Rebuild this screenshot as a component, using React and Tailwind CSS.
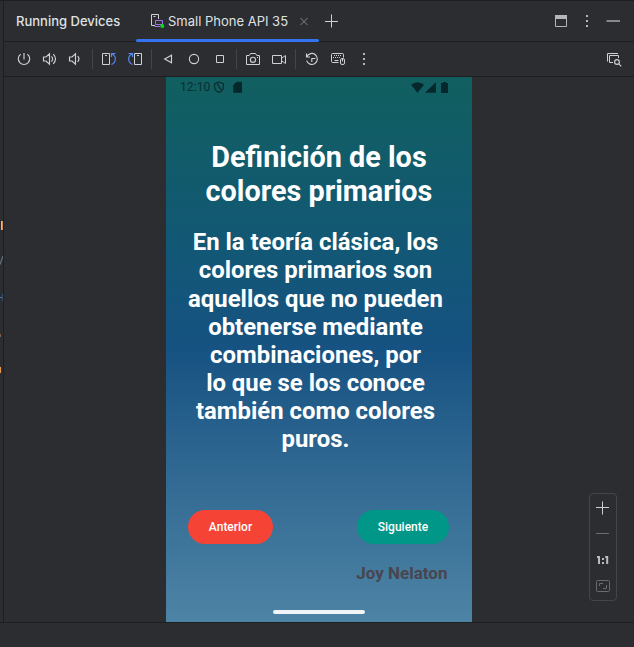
import React from "react";

function Icon({ children, className = "", w = 16, h = 16 }) {
  return (
    <svg
      width={w}
      height={h}
      viewBox={`0 0 ${w} ${h}`}
      fill="none"
      stroke="#ced0d6"
      className={`block shrink-0 ${className}`}
    >
      {children}
    </svg>
  );
}

function Tool({ children }) {
  return (
    <button className="flex h-[26px] w-[26px] shrink-0 items-center justify-center">
      <Icon>{children}</Icon>
    </button>
  );
}

function Separator() {
  return (
    <div className="flex h-5 w-[7px] shrink-0 justify-center">
      <div className="w-px bg-[#43454a]" />
    </div>
  );
}

function MoreDots() {
  return (
    <g fill="#b4b6bb" stroke="none">
      <rect x="7" y="2" width="2" height="2" />
      <rect x="7" y="7" width="2" height="2" />
      <rect x="7" y="12" width="2" height="2" />
    </g>
  );
}

function EditorEdge() {
  return (
    <div className="h-[621px] w-[3px] shrink-0 overflow-hidden">
      <svg width="3" height="621" viewBox="0 1 3 621" className="block">
        <rect x="1" y="221" width="1" height="9" fill="#a9c4e6" />
        <rect x="2" y="221" width="1" height="9" fill="#d68f4c" />
        <path d="M0 264.5 L3 256" stroke="#64727f" strokeWidth="1.2" />
        <path d="M0 297.5H3" stroke="#68717c" />
        <path d="M2.5 294V301" stroke="#345078" />
        <rect x="0" y="334" width="1" height="3" fill="#80604c" />
        <rect x="0" y="367" width="1" height="6" fill="#e59a4a" />
      </svg>
    </div>
  );
}

function TabBar() {
  return (
    <div className="flex h-10 shrink-0 items-center pl-3">
      <div className="w-[120px] shrink-0 whitespace-nowrap text-[13px] font-medium leading-5 text-[#dfe1e5]">
        Running Devices
      </div>
      <div className="flex h-10 w-[183px] shrink-0 flex-col">
        <div className="flex h-9 shrink-0 items-center pt-1 pl-[14px]">
          <Icon>
            <path d="M5 12.5H1.5V1.5H8.5V6" />
            <path d="M3.5 3.5H5.5" />
            <path d="M5.5 7.5H12.5V11.5H5.5ZM4.5 13.5H10" stroke="#a571e6" />
            <circle cx="12.3" cy="13" r="2" fill="#00e31c" stroke="none" />
          </Icon>
          <span className="ml-[2px] whitespace-nowrap text-[13px] leading-5 text-[#dfe1e5]">
            Small Phone API 35
          </span>
          <Icon className="ml-auto mr-[7px]">
            <path d="M4.5 5L11.5 12M11.5 5L4.5 12" stroke="#85878c" />
          </Icon>
        </div>
        <div className="relative z-10 mt-auto -mb-px h-[3px] shrink-0 rounded-[2px] bg-[#3574f0]" />
      </div>
      <Icon className="ml-[4px]">
        <path d="M8.5 1.5V14.5M2 8.5H15" />
      </Icon>
      <div className="ml-auto flex gap-[10px] pr-[13px]">
        <Icon>
          <path d="M2.5 3V13.5H13.5V3" stroke="#b4b6bb" />
          <rect x="2" y="2" width="12" height="4" fill="#b4b6bb" stroke="none" />
        </Icon>
        <Icon>
          <MoreDots />
        </Icon>
        <Icon>
          <path d="M1.5 8H15" stroke="#87898e" strokeWidth="2" />
        </Icon>
      </div>
    </div>
  );
}

function Toolbar() {
  return (
    <div className="flex h-[34px] shrink-0 items-center pl-[7px]">
      <Tool>
        <path d="M4.6 3.2A5.7 5.7 0 1 0 11.4 3.2M8 2V8.5" strokeWidth="1.15" />
      </Tool>
      <Tool>
        <path
          d="M1.5 6H4L7.5 2.8V13.2L4 10H1.5ZM9.5 5.4Q11.7 8 9.5 10.6M11.3 3.2Q15.7 8 11.3 12.8"
          strokeWidth="1.15"
        />
      </Tool>
      <Tool>
        <path d="M1.5 6H4L7.5 2.8V13.2L4 10H1.5ZM9.6 5.2Q12.4 8 9.6 10.8" strokeWidth="1.15" />
      </Tool>
      <Separator />
      <Tool>
        <path d="M1.5 2.5H8.5V13.5H1.5ZM4 4.5H6" />
        <path d="M10.5 6V2.5H14.5M10.8 2.8C15.8 5.2 15.3 11.2 10.5 13.5" stroke="#548af7" strokeWidth="1.15" />
      </Tool>
      <Tool>
        <path d="M7.5 2.5H14.5V13.5H7.5ZM10 4.5H12" />
        <path d="M5.5 6V2.5H1.5M5.2 2.8C.2 5.2 .7 11.2 5.5 13.5" stroke="#548af7" strokeWidth="1.15" />
      </Tool>
      <Separator />
      <Tool>
        <path d="M11.5 4.3V11.7L4.7 8Z" strokeWidth="1.15" />
      </Tool>
      <Tool>
        <circle cx="8" cy="8" r="4.6" strokeWidth="1.15" />
      </Tool>
      <Tool>
        <path d="M4.5 4.5H11.5V11.5H4.5Z" />
      </Tool>
      <Separator />
      <Tool>
        <path d="M1.5 4.5H4.2L5.5 2.5H10.5L11.8 4.5H14.5V13.5H1.5Z" strokeLinejoin="round" />
        <circle cx="8" cy="8.8" r="2.6" strokeWidth="1.15" />
        <path d="M12 6.5H13" />
      </Tool>
      <Tool>
        <path d="M1.5 4.5H10.5V12.5H1.5ZM10.5 7.3L14.5 4.5V12.5L10.5 9.7" />
      </Tool>
      <Separator />
      <Tool>
        <path d="M2.5 2.5V6H6M2.8 5.8A5.5 5.5 0 1 1 2.6 9.6M11.5 7.5H7.8V11" strokeWidth="1.15" />
      </Tool>
      <Tool>
        <path d="M8.5 11.5H2.5Q1.5 11.5 1.5 10.5V3.5Q1.5 2.5 2.5 2.5H12.5Q13.5 2.5 13.5 3.5V6.5" />
        <path d="M4 4.5H12M3 6.5H11" strokeDasharray="1 1" />
        <path d="M4.5 9.5H8.5" />
        <rect x="10.5" y="7.5" width="4" height="6" rx="1.5" />
        <path d="M12.5 8V10.5" />
      </Tool>
      <Tool>
        <MoreDots />
      </Tool>
      <div className="ml-auto pr-[7px]">
        <Tool>
          <path d="M1.5 10.5V2.5H12M7 11.5H3.5V4.5H12.5V7" />
          <circle cx="11" cy="11" r="2.4" strokeWidth="1.15" />
          <path d="M12.8 12.8L15.3 15.3" strokeWidth="1.15" />
        </Tool>
      </div>
    </div>
  );
}

function StatusBar() {
  return (
    <div className="flex h-5 items-center pl-[14px] pr-6 text-[12px] leading-5 text-[#0a2e31]">
      <span className="w-[33px] tracking-[0.1px]">12:10</span>
      <Icon w={12} h={12}>
        <path
          d="M6 1L10.4 2.7V5.5C10.4 8.2 8.6 10.4 6 11.4C3.4 10.4 1.6 8.2 1.6 5.5V2.7ZM4.4 2.6L7.9 8.9"
          stroke="#0a2e31"
          strokeWidth="1.3"
        />
      </Icon>
      <Icon w={10} h={12} className="ml-[8px]">
        <path d="M3.5 1.3H8.5V11.3H.8V4Z" fill="#06282c" stroke="#06282c" strokeLinejoin="round" />
      </Icon>
      <div className="ml-auto flex">
        <Icon w={13} h={12}>
          <path d="M0 3.8Q6.5 -1.2 13 3.8L6.5 11.7Z" fill="#06282c" stroke="none" />
        </Icon>
        <Icon w={11} h={12} className="ml-px">
          <path d="M0 11.7L11 1V11.7Z" fill="#06282c" stroke="none" />
        </Icon>
        <Icon w={7} h={12} className="ml-[5px]">
          <path d="M0 2H2V1H5V2H7V12H0Z" fill="#06282c" stroke="none" />
        </Icon>
      </div>
    </div>
  );
}

function Phone() {
  return (
    <div className="flex h-[545px] w-[306px] shrink-0 flex-col bg-linear-to-b from-[#115f5f] via-[#165282] to-[#4d84a5] font-[Roboto,sans-serif] text-white">
      <StatusBar />
      <h1 className="mt-[43px] whitespace-nowrap text-center text-[28.8px] font-bold leading-[34px]">
        Definición de los
        <br />
        colores primarios
      </h1>
      <p className="mt-[20.2px] whitespace-nowrap pr-[7px] text-center text-[23.9px] font-bold leading-[28.15px]">
        En la teoría clásica, los
        <br />
        colores primarios son
        <br />
        aquellos que no pueden
        <br />
        obtenerse mediante
        <br />
        combinaciones, por
        <br />
        lo que se los conoce
        <br />
        también como colores
        <br />
        puros.
      </p>
      <div className="mt-auto flex justify-between pl-[22px] pr-[23px] text-[12px] font-medium">
        <button className="h-[34px] w-[85px] rounded-full bg-[#f54436]">Anterior</button>
        <button className="h-[34px] w-[92px] rounded-full bg-[#009788]">Siguiente</button>
      </div>
      <div className="mt-[19px] h-5 pr-[24.5px] text-right text-[17px] font-bold leading-5 text-[#49454f]">
        Joy Nelaton
      </div>
      <div className="mx-auto mt-[26.6px] mb-[8px] h-1 w-[92px] shrink-0 rounded-full bg-[#f1f5f8]" />
    </div>
  );
}

function ZoomPanel() {
  return (
    <div className="mb-[21px] flex h-[108px] w-7 flex-col items-center rounded-[4px] border border-[#43454a] pt-[6px]">
      <Icon>
        <path d="M7.5 1.5V14.5M1 7.5H14" />
      </Icon>
      <Icon className="mt-[10px]">
        <path d="M1 7.5H14" stroke="#6b6d72" />
      </Icon>
      <Icon className="mt-[10px]">
        <path d="M2 4.9H4V12M10.2 4.9H12.2V12" stroke="#b9bbc0" strokeWidth="2" />
        <path d="M7 6H9V8H7ZM7 10H9V12H7Z" fill="#b9bbc0" stroke="none" />
      </Icon>
      <Icon className="mt-[9px]">
        <rect x="1.5" y="3.5" width="13" height="11" rx="1" stroke="#696b70" />
        <path d="M4.5 9V6.5H8M11.5 8V11.5H8" stroke="#696b70" />
      </Icon>
    </div>
  );
}

export default function App() {
  return (
    <div className="flex h-[647px] w-[634px] flex-col overflow-hidden border-t border-[#1e1f22] bg-[#2b2d30] font-[Inter,sans-serif]">
      <div className="flex h-[621px] shrink-0">
        <EditorEdge />
        <div className="flex min-w-0 flex-1 flex-col border-l border-[#1e1f22]">
          <TabBar />
          <div className="h-px shrink-0 bg-[#1e1f22]" />
          <Toolbar />
          <div className="h-px shrink-0 bg-[#1e1f22]" />
          <div className="flex h-[545px] shrink-0 items-end justify-between pl-[162px] pr-[17px]">
            <Phone />
            <ZoomPanel />
          </div>
        </div>
      </div>
      <div className="h-px shrink-0 bg-[#1e1f22]" />
    </div>
  );
}
